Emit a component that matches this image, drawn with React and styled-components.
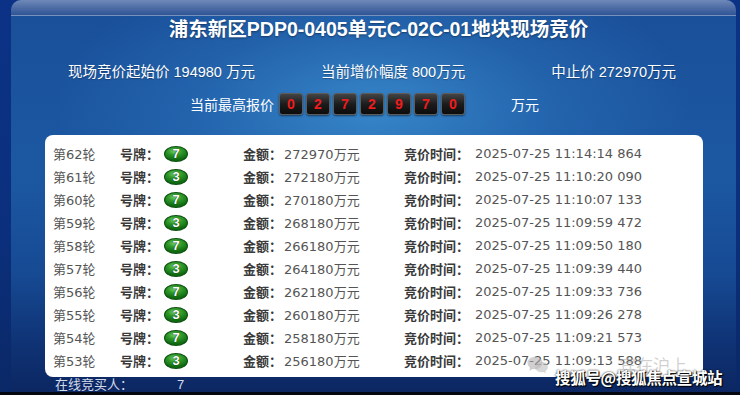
import styled, { createGlobalStyle } from "styled-components";

const GlobalStyle = createGlobalStyle`
    html, body {
        margin: 0;
        padding: 0;
        background: #0a2c78;
    }
    #root {
        width: 740px;
        height: 395px;
        overflow: hidden;
    }
`

const Pagina = styled.div`
    width: 740px;
    height: 395px;
    display: flex;
    flex-direction: column;
    position: relative;
    background: linear-gradient(180deg, #0b3286 0%, #0b2f7c 60%, #0a2866 100%);
    font-family: "Liberation Sans", "Noto Sans CJK SC", sans-serif;
`

const Tela = styled.div`
    flex: 1;
    margin: 0 4px 0 11px;
    display: flex;
    flex-direction: column;
    border-radius: 10px 10px 0 0;
    overflow: hidden;
    background:
        radial-gradient(ellipse 55% 50% at 50% 28%, rgba(64, 150, 215, 0.75) 0%, rgba(44, 118, 190, 0.45) 45%, rgba(30, 90, 165, 0) 80%),
        linear-gradient(180deg, #1a4f99 0%, #1c58a2 45%, #164a93 70%, #0f3274 88%, #0c2762 100%);
`

const BarraTopo = styled.div`
    height: 15px;
    flex-shrink: 0;
    background: linear-gradient(180deg, #6f89b8 0%, #4f6ea6 50%, #2f5597 100%);
    border-bottom: 1px solid rgba(255, 255, 255, 0.08);
`

const Titulo = styled.h1`
    margin: 0;
    height: 26px;
    line-height: 26px;
    text-align: center;
    color: #ffffff;
    font-size: 19.5px;
    font-weight: 700;
    text-shadow: 0 1px 2px rgba(0, 0, 0, 0.4);
    padding-left: 10px;
`

const LinhaInfo = styled.div`
    margin-top: 18px;
    height: 20px;
    display: flex;
    align-items: center;
    padding-left: 57px;
`

const ItemInfo = styled.span`
    margin-left: ${props => props.$ml || 0}px;
    color: #ffffff;
    font-size: 14.5px;
    white-space: nowrap;
    text-shadow: 0 1px 1px rgba(0, 0, 0, 0.3);
`

const LinhaContador = styled.div`
    margin-top: 13px;
    height: 22px;
    display: flex;
    align-items: center;
    padding-left: 179px;
    color: #ffffff;
    font-size: 14px;
`

const Digitos = styled.div`
    display: flex;
    gap: 3px;
    margin-left: 5px;
    margin-right: 46px;
`

const Digito = styled.span`
    width: 24px;
    height: 22px;
    display: flex;
    align-items: center;
    justify-content: center;
    border-radius: 3px;
    border: 1px solid #5c5c5c;
    box-sizing: border-box;
    background: linear-gradient(180deg, #444 0%, #1c1c1c 50%, #0c0c0c 100%);
    box-shadow: 0 1px 2px rgba(0, 0, 0, 0.5);
    color: #ee1c1c;
    font-size: 14px;
    font-weight: 700;
`

const Painel = styled.div`
    margin: 20px 0 0 34px;
    width: 658px;
    height: 242px;
    box-sizing: border-box;
    padding: 7px 0 5px 8px;
    background: #ffffff;
    border-radius: 8px;
    display: flex;
    flex-direction: column;
`

const Linha = styled.div`
    height: 23px;
    display: grid;
    grid-template-columns: 67px 44px 79px 161px 1fr;
    align-items: center;
    font-family: "DejaVu Sans", "Noto Sans CJK SC", sans-serif;
    font-size: 13px;
    color: #555;
    white-space: nowrap;
`

const Celula = styled.span`
    display: flex;
    align-items: center;
    gap: ${props => props.$gap || 0}px;
`

const Rotulo = styled.span`
    font-family: "Noto Sans CJK SC", sans-serif;
    font-weight: 700;
    color: #3a3a3a;
    font-size: 13px;
`

const Placa = styled.span`
    width: 24px;
    height: 16px;
    border-radius: 50%;
    display: flex;
    align-items: center;
    justify-content: center;
    background: radial-gradient(ellipse 70% 60% at 45% 30%, #7fd36b 0%, #2f9a2a 45%, #0f6a12 100%);
    border: 1px solid #0b4f0d;
    box-sizing: border-box;
    color: #ffffff;
    font-family: "Liberation Sans", sans-serif;
    font-weight: 700;
    font-size: 13px;
    text-shadow: 0 0 1px #063a08, 0 0 1px #063a08;
`

const Rodape = styled.div`
    height: 16px;
    line-height: 16px;
    display: flex;
    align-items: center;
    padding-left: 44px;
    color: #d3dbea;
    font-size: 13px;
`

const Contagem = styled.span`
    margin-left: 44px;
`

const FaixaPreta = styled.div`
    height: 3px;
    background: #050810;
`

const MarcaCinza = styled.div`
    position: absolute;
    left: 527px;
    top: 352px;
    display: flex;
    align-items: center;
    gap: 70px;
    color: rgba(170, 170, 170, 0.55);
    font-family: "Noto Sans CJK SC", sans-serif;
    font-size: 17px;
`

const MarcaDagua = styled.div`
    position: absolute;
    left: 555px;
    top: 366px;
    color: #ffffff;
    font-family: "Noto Sans CJK SC", sans-serif;
    font-weight: 700;
    font-size: 15.5px;
    letter-spacing: -0.3px;
    text-shadow: 0 0 2px #000, 1px 1px 1px #000;
`

const lances = [
    { rodada: 62, placa: 7, valor: 272970, hora: "2025-07-25 11:14:14 864" },
    { rodada: 61, placa: 3, valor: 272180, hora: "2025-07-25 11:10:20 090" },
    { rodada: 60, placa: 7, valor: 270180, hora: "2025-07-25 11:10:07 133" },
    { rodada: 59, placa: 3, valor: 268180, hora: "2025-07-25 11:09:59 472" },
    { rodada: 58, placa: 7, valor: 266180, hora: "2025-07-25 11:09:50 180" },
    { rodada: 57, placa: 3, valor: 264180, hora: "2025-07-25 11:09:39 440" },
    { rodada: 56, placa: 7, valor: 262180, hora: "2025-07-25 11:09:33 736" },
    { rodada: 55, placa: 3, valor: 260180, hora: "2025-07-25 11:09:26 278" },
    { rodada: 54, placa: 7, valor: 258180, hora: "2025-07-25 11:09:21 573" },
    { rodada: 53, placa: 3, valor: 256180, hora: "2025-07-25 11:09:13 588" },
]

const IconeWechat = () => (
    <svg width="22" height="18" viewBox="0 0 22 18">
        <ellipse cx="8" cy="7" rx="7.5" ry="6.2" fill="rgba(170,170,170,0.55)" />
        <path d="M3 11.5 L2.5 15 L6 12.5 Z" fill="rgba(170,170,170,0.55)" />
        <ellipse cx="14.5" cy="11" rx="6.5" ry="5.2" fill="rgba(190,190,190,0.6)" />
        <path d="M18 15 L19.5 17.5 L16 15.8 Z" fill="rgba(190,190,190,0.6)" />
    </svg>
)

const App = () => {
    return (
        <>
            <GlobalStyle />
            <Pagina>
                <Tela>
                    <BarraTopo />
                    <Titulo>浦东新区PDP0-0405单元C-02C-01地块现场竞价</Titulo>
                    <LinhaInfo>
                        <ItemInfo>现场竞价起始价 194980 万元</ItemInfo>
                        <ItemInfo $ml={66}>当前增价幅度 800万元</ItemInfo>
                        <ItemInfo $ml={86}>中止价 272970万元</ItemInfo>
                    </LinhaInfo>
                    <LinhaContador>
                        <span>当前最高报价</span>
                        <Digitos>
                            {"0272970".split("").map((d, i) => (
                                <Digito key={i}>{d}</Digito>
                            ))}
                        </Digitos>
                        <span>万元</span>
                    </LinhaContador>
                    <Painel>
                        {lances.map(l => (
                            <Linha key={l.rodada}>
                                <span>第{l.rodada}轮</span>
                                <Rotulo>号牌：</Rotulo>
                                <Celula><Placa>{l.placa}</Placa></Celula>
                                <Celula $gap={2}>
                                    <Rotulo>金额：</Rotulo>
                                    <span>{l.valor}万元</span>
                                </Celula>
                                <Celula $gap={6}>
                                    <Rotulo>竞价时间：</Rotulo>
                                    <span>{l.hora}</span>
                                </Celula>
                            </Linha>
                        ))}
                    </Painel>
                    <Rodape>
                        <span>在线竞买人：</span>
                        <Contagem>7</Contagem>
                    </Rodape>
                </Tela>
                <FaixaPreta />
                <MarcaCinza>
                    <IconeWechat />
                    <span>宾在沪上</span>
                </MarcaCinza>
                <MarcaDagua>搜狐号@搜狐焦点宣城站</MarcaDagua>
            </Pagina>
        </>
    )
}

export default App;
